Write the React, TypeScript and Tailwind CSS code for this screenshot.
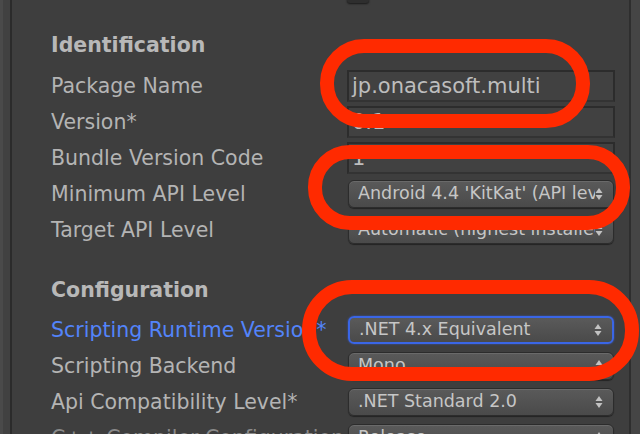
import React from "react";

const Arrows = () => (
  <svg width="8" height="14" viewBox="0 0 8 14" className="shrink-0">
    <path d="M4 1 L7.5 6 L0.5 6 Z" fill="#c2c2c2" />
    <path d="M4 13 L7.5 8 L0.5 8 Z" fill="#c2c2c2" />
  </svg>
);

const Label = ({ children, blue, dim }: { children: React.ReactNode; blue?: boolean; dim?: boolean }) => (
  <div
    className={`w-[296px] shrink-0 whitespace-nowrap ${blue ? "text-[#5384fa]" : dim ? "text-[#8a8a8a]" : "text-[#b4b4b4]"}`}
  >
    {children}
  </div>
);

const TextField = ({ value }: { value: string }) => (
  <div className="h-[32px] w-[268px] shrink-0 border-2 border-[#2c2c2c] border-b-[#333333] bg-[#414141] pl-[3px] flex items-center text-[21px] text-[#bdbdbd] overflow-hidden whitespace-nowrap">
    {value}
  </div>
);

const Dropdown = ({ value, focused }: { value: string; focused?: boolean }) => (
  <div
    className={`h-[28px] w-[266px] shrink-0 ml-[1px] rounded-[6px] flex items-center pl-[9px] pr-[10px] bg-gradient-to-b from-[#5a5a5a] to-[#4a4a4a] text-[17.5px] text-[#c6c6c6] ${
      focused
        ? "border-2 border-[#3a66e6] shadow-[0_0_2px_rgba(60,100,230,0.8)]"
        : "border border-[#2c2c2c] shadow-[0_1px_1px_rgba(0,0,0,0.45),inset_0_1px_0_rgba(255,255,255,0.1)]"
    }`}
  >
    <div className="flex-1 overflow-hidden whitespace-nowrap">{value}</div>
    <Arrows />
  </div>
);

const Row = ({ children }: { children: React.ReactNode }) => (
  <div className="h-[36px] shrink-0 flex items-center">{children}</div>
);

export default function App() {
  return (
    <div
      className="relative w-[640px] h-[434px] overflow-hidden bg-[#3e3e3e] flex text-[20.5px] leading-none"
      style={{ fontFamily: '"DejaVu Sans", "Lucida Grande", sans-serif' }}
    >
      {/* left gutter */}
      <div className="w-[3px] shrink-0 bg-[#4a4a4a]" />
      <div className="w-[7px] shrink-0 bg-[#414141]" />
      <div className="w-[2px] shrink-0 bg-[#2b2b2b]" />

      {/* content */}
      <div className="flex-1 flex flex-col pl-[39px]">
        <div className="h-[3px] shrink-0 flex">
          <div className="ml-[296px] mt-[-18px] w-[22px] h-[21px] rounded-[3px] bg-[#2e2e2e] shadow-[0_1px_2px_rgba(0,0,0,0.6)]" />
        </div>
        <div className="h-[24px] shrink-0" />
        <Row>
          <div className="font-bold text-[#b8b8b8]">Identification</div>
        </Row>
        <div className="h-[5px] shrink-0" />
        <Row>
          <Label>Package Name</Label>
          <TextField value="jp.onacasoft.multi" />
        </Row>
        <Row>
          <Label>Version*</Label>
          <TextField value="0.1" />
        </Row>
        <Row>
          <Label>Bundle Version Code</Label>
          <TextField value="1" />
        </Row>
        <Row>
          <Label>Minimum API Level</Label>
          <Dropdown value="Android 4.4 'KitKat' (API level 19)" />
        </Row>
        <Row>
          <Label>Target API Level</Label>
          <Dropdown value="Automatic (highest installed)" />
        </Row>
        <div className="h-[24px] shrink-0" />
        <Row>
          <div className="font-bold text-[#b8b8b8]">Configuration</div>
        </Row>
        <div className="h-[4px] shrink-0" />
        <Row>
          <Label blue>Scripting Runtime Version*</Label>
          <Dropdown value=".NET 4.x Equivalent" focused />
        </Row>
        <Row>
          <Label>Scripting Backend</Label>
          <Dropdown value="Mono" />
        </Row>
        <Row>
          <Label>Api Compatibility Level*</Label>
          <Dropdown value=".NET Standard 2.0" />
        </Row>
        <Row>
          <Label dim>C++ Compiler Configuration</Label>
          <Dropdown value="Release" />
        </Row>
      </div>

      {/* right gutter */}
      <div className="w-[2px] shrink-0 bg-[#2e2e2e]" />
      <div className="w-[9px] shrink-0 bg-[#454545]" />

      {/* red annotations */}
      <svg className="absolute inset-0 pointer-events-none" width="640" height="434" viewBox="0 0 640 434">
        <rect x="327" y="46" width="256" height="75" rx="37" fill="none" stroke="#ff2a00" strokeWidth="14" />
        <rect x="315" y="152" width="308" height="71" rx="35" fill="none" stroke="#ff2a00" strokeWidth="14" />
        <rect x="309" y="287" width="323" height="87" rx="43" fill="none" stroke="#ff2a00" strokeWidth="14" />
      </svg>
    </div>
  );
}
